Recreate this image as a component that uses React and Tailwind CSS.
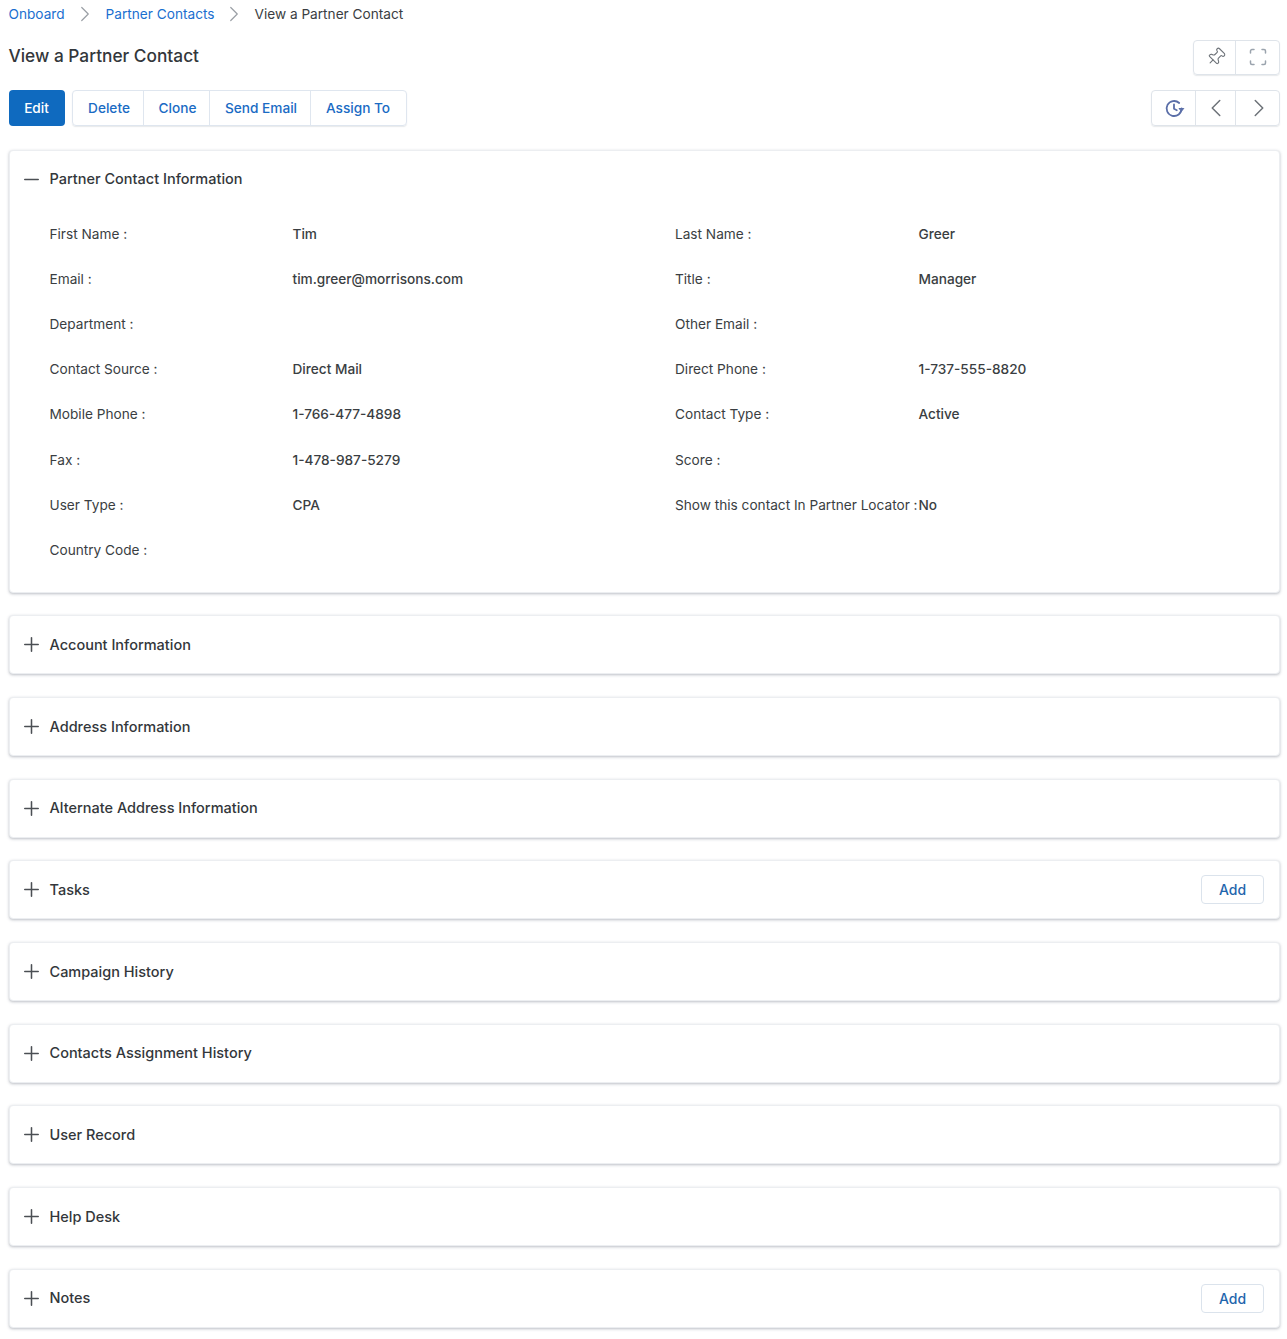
import { ChevronLeft, ChevronRight, Minus, Pin, Plus } from "lucide-react";

const fields = [
  ["First Name :", "Tim", "Last Name :", "Greer"],
  ["Email :", "tim.greer@morrisons.com", "Title :", "Manager"],
  ["Department :", "", "Other Email :", ""],
  ["Contact Source :", "Direct Mail", "Direct Phone :", "1-737-555-8820"],
  ["Mobile Phone :", "1-766-477-4898", "Contact Type :", "Active"],
  ["Fax :", "1-478-987-5279", "Score :", ""],
  ["User Type :", "CPA", "Show this contact In Partner Locator :", "No"],
  ["Country Code :", "", "", ""],
];

const sections = [
  { title: "Account Information" },
  { title: "Address Information" },
  { title: "Alternate Address Information" },
  { title: "Tasks", add: true },
  { title: "Campaign History" },
  { title: "Contacts Assignment History" },
  { title: "User Record" },
  { title: "Help Desk" },
  { title: "Notes", add: true },
];

const HistoryIcon = () => (
  <svg width="21" height="21" viewBox="0 0 21 21" fill="none" stroke="#5a6ea8" strokeWidth="1.8" strokeLinecap="round" strokeLinejoin="round">
    <path d="M17.6 10.5a7.5 7.5 0 1 1-2.4-5.5" />
    <path d="M10 6.5v4.3l2.8 1.4" />
    <path d="M15.4 10.5h4.4l-2.2 2.4z" fill="#5a6ea8" strokeWidth="1" />
  </svg>
);

const FullscreenIcon = () => (
  <svg width="18" height="18" viewBox="0 0 18 18" fill="none" stroke="#9aa3ad" strokeWidth="1.5" strokeLinecap="round">
    <path d="M1.5 5V3a1.5 1.5 0 0 1 1.5-1.5h2M13 1.5h2A1.5 1.5 0 0 1 16.5 3v2M16.5 13v2a1.5 1.5 0 0 1-1.5 1.5h-2M5 16.5H3A1.5 1.5 0 0 1 1.5 15v-2" />
  </svg>
);

const Section = ({ title, add }) => (
  <div className="flex h-[59px] items-center justify-between rounded border border-[#eceef1] bg-white pl-[10px] pr-[15px] shadow-[0_1px_3px_rgba(60,70,90,0.35)]">
    <div className="flex items-center gap-[7px]">
      <Plus className="h-[23px] w-[23px] text-[#4b4f54]" strokeWidth={1.6} />
      <span className="text-[14.5px] font-medium text-[#33373b]">{title}</span>
    </div>
    {add && (
      <button className="h-[29px] w-[63px] rounded-sm border border-[#dbe3ec] bg-white text-[14px] font-medium text-[#1f66ad]">
        Add
      </button>
    )}
  </div>
);

export default function App() {
  return (
    <div className="min-h-[1339px] bg-white pl-[8.5px] pr-[7px] font-['Inter',sans-serif] text-[13.65px] text-[#3a3e42]">
      <nav className="flex h-[28px] items-center">
        <a className="text-[#1a6fd0]">Onboard</a>
        <ChevronRight className="mx-[7.5px] h-[26px] w-[26px] text-[#9a9fa5]" strokeWidth={1.1} />
        <a className="text-[#1a6fd0]">Partner Contacts</a>
        <ChevronRight className="mx-[7px] h-[26px] w-[26px] text-[#9a9fa5]" strokeWidth={1.1} />
        <span>View a Partner Contact</span>
      </nav>

      <div className="mt-[11px] flex h-[36px] items-center justify-between">
        <h1 className="pb-[3px] text-[17.3px] font-medium text-[#33373b]">View a Partner Contact</h1>
        <div className="flex h-[35px] rounded border border-[#dfe4ea] shadow-[0_1px_1px_rgba(60,70,90,0.12)]">
          <button className="flex w-[42px] items-center justify-center border-r border-[#dfe4ea] pl-[3px]">
            <Pin className="h-[20px] w-[20px] rotate-45 text-[#6d7278]" strokeWidth={1.3} />
          </button>
          <button className="flex w-[43px] items-center justify-center">
            <FullscreenIcon />
          </button>
        </div>
      </div>

      <div className="mt-[15px] flex h-[36px] items-stretch justify-between">
        <div className="flex gap-[7px]">
          <button className="w-[56px] rounded-sm bg-[#0f6abf] font-medium text-white">Edit</button>
          <div className="flex rounded-sm border border-[#dfe6ef] font-medium text-[#1a6bc4] shadow-[0_1px_1px_rgba(60,70,90,0.12)]">
            <button className="w-[71px] border-r border-[#dfe6ef] pl-[3px]">Delete</button>
            <button className="w-[66px] border-r border-[#dfe6ef] pl-[3px]">Clone</button>
            <button className="w-[101px] border-r border-[#dfe6ef] pl-[3px]">Send Email</button>
            <button className="w-[95px]">Assign To</button>
          </div>
        </div>
        <div className="flex rounded border border-[#dfe4ea] shadow-[0_1px_1px_rgba(60,70,90,0.12)]">
          <button className="flex w-[44px] items-center justify-center border-r border-[#dfe4ea] pl-[2px]">
            <HistoryIcon />
          </button>
          <button className="flex w-[40px] items-center justify-center border-r border-[#dfe4ea]">
            <ChevronLeft className="h-[30px] w-[30px] text-[#6d7278]" strokeWidth={1.2} />
          </button>
          <button className="flex w-[43px] items-center justify-center pl-[2px]">
            <ChevronRight className="h-[30px] w-[30px] text-[#6d7278]" strokeWidth={1.2} />
          </button>
        </div>
      </div>

      <div className="mt-[23.5px] flex flex-col gap-[22.7px]">
        <div className="h-[443px] rounded border border-[#eceef1] bg-white pl-[10px] pr-[15px] shadow-[0_1px_3px_rgba(60,70,90,0.35)]">
          <div className="flex h-[57px] items-center gap-[7px]">
            <Minus className="h-[23px] w-[23px] text-[#4b4f54]" strokeWidth={1.6} />
            <span className="text-[14.5px] font-medium text-[#33373b]">Partner Contact Information</span>
          </div>
          <div className="mt-[4px] pl-[30px]">
            {fields.map(([label, value, label2, value2]) => (
              <div key={label} className="flex h-[45.15px] items-center whitespace-nowrap">
                <span className="w-[243px]">{label}</span>
                <span className="w-[382.5px] font-medium">{value}</span>
                <span className="w-[243.5px]">{label2}</span>
                <span className="font-medium">{value2}</span>
              </div>
            ))}
          </div>
        </div>
        {sections.map((s) => (
          <Section key={s.title} title={s.title} add={s.add} />
        ))}
      </div>
    </div>
  );
}
